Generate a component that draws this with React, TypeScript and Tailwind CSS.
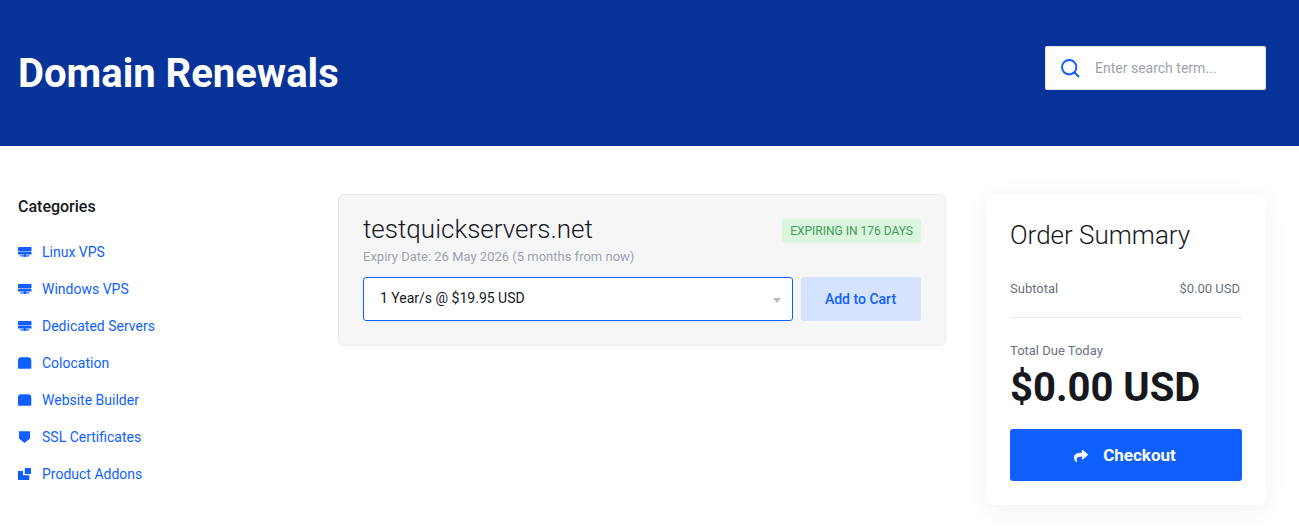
const categories = [
  { label: 'Linux VPS', icon: 'server' },
  { label: 'Windows VPS', icon: 'server' },
  { label: 'Dedicated Servers', icon: 'server' },
  { label: 'Colocation', icon: 'box' },
  { label: 'Website Builder', icon: 'box' },
  { label: 'SSL Certificates', icon: 'shield' },
  { label: 'Product Addons', icon: 'cubes' },
]

function CategoryIcon({ name }: { name: string }) {
  if (name === 'server') {
    return (
      <svg width="14" height="12" viewBox="0 0 14 12" fill="#0f5fff">
        <rect x="0" y="1" width="13.500" height="4.500" rx="0.7" />
        <rect x="0" y="6" width="13.500" height="2.600" rx="0.5" />
        <rect x="5.800" y="8" width="2" height="3" />
        <rect x="2.300" y="9.300" width="9" height="1.200" />
      </svg>
    )
  }
  if (name === 'box') {
    return (
      <svg width="14" height="12" viewBox="0 0 14 12" fill="#0f5fff">
        <path d="M3 0.300h7.500a2.800 2.800 0 0 1 2.800 2.500V11a0.800 0.800 0 0 1-.8.800H0.800a0.800 0.800 0 0 1-.8-.8V2.800a2.800 2.800 0 0 1 3-2.500z" />
      </svg>
    )
  }
  if (name === 'shield') {
    return (
      <svg width="14" height="12" viewBox="0 0 14 12" fill="#0f5fff">
        <path d="M1 0.300h11v7.200L6.500 12 1 7.500z" />
      </svg>
    )
  }
  return (
    <svg width="14" height="12" viewBox="0 0 14 12" fill="#0f5fff">
      <path d="M0 3h5v4.200h6.300v4.800H0zM6.800 0h6.200v6H6.800z" />
    </svg>
  )
}

export default function App() {
  return (
    <div className="h-[532px] overflow-hidden bg-white font-['Roboto',sans-serif]">
      {/* Header */}
      <header className="h-[146px] bg-[#083399] px-[18px] flex items-center justify-between">
        <h1 className="pt-[1px] text-[40px] leading-none font-bold text-white">Domain Renewals</h1>
        <div className="mr-[15px] mb-[10px] flex items-center w-[221px] h-[44px] bg-white rounded-[2px] border border-[#ced4da]/60 pl-[14px]">
          <svg width="20" height="20" viewBox="0 0 20 20" fill="none" stroke="#0f5fff" strokeWidth="2">
            <circle cx="9.200" cy="9.200" r="7.200" />
            <path d="M14.500 14.500l4.500 4.500" />
          </svg>
          <span className="ml-[15px] text-sm text-[#9ca3af]">Enter search term...</span>
        </div>
      </header>

      <div className="flex items-start pl-[18px] pt-[48px]">
        {/* Sidebar */}
        <aside className="w-[320px] shrink-0">
          <h3 className="text-base leading-6 font-medium text-[#16181d] mt-[1px]">Categories</h3>
          <ul className="mt-[14px] flex flex-col">
            {categories.map(c => (
              <li key={c.label} className="h-[37px] flex items-center gap-[10px] text-sm text-[#0f5fff]">
                <CategoryIcon name={c.icon} />
                {c.label}
              </li>
            ))}
          </ul>
          <h3 className="mt-[36px] text-base leading-6 font-medium text-[#16181d]">Actions</h3>
        </aside>

        {/* Renewal card */}
        <main className="w-[608px] shrink-0 h-[152px] rounded-md border border-[#e9eaec] bg-[#f6f6f7] px-[24px] pt-[17px]">
          <div className="flex items-start justify-between">
            <div>
              <div className="text-[26px] leading-[35px] font-light text-[#16181d]">testquickservers.net</div>
              <div className="text-[13px] leading-[19px] text-[#9ca3af]">Expiry Date: 26 May 2026 (5 months from now)</div>
            </div>
            <span className="mt-[7px] h-[24px] px-[8px] flex items-center rounded-[3px] bg-[#dbf5df] text-xs text-[#3f9f55]">
              EXPIRING IN 176 DAYS
            </span>
          </div>
          <div className="mt-[11px] flex gap-[8px]">
            <div className="relative flex-1 h-[44px] flex items-center rounded-[3px] border border-[#0f5fff] bg-white pl-[16px] pb-[2px] text-sm text-[#16181d]">
              1 Year/s @ $19.95 USD
              <span className="absolute right-[11px] top-[20px] w-0 h-0 border-x-[4px] border-x-transparent border-t-[5px] border-t-[#b9bcc2]" />
            </div>
            <button className="w-[120px] h-[44px] pr-[1px] rounded-[3px] bg-[#d6e3ff] text-sm font-medium text-[#0f5fff]">Add to Cart</button>
          </div>
        </main>

        {/* Order summary */}
        <section className="ml-[40px] w-[280px] shrink-0 h-[311px] rounded-lg bg-white px-[24px] pt-[24px] shadow-[0_4px_24px_rgba(0,0,0,0.06)]">
          <h2 className="text-[26px] leading-[34px] font-light text-[#16181d]">Order Summary</h2>
          <div className="mt-[27px] flex justify-between text-[13px] leading-[19px] text-[#6b7280]">
            <span>Subtotal</span>
            <span className="mr-[2px]">$0.00 USD</span>
          </div>
          <div className="mt-[19px] border-t border-[#e9eaec]" />
          <div className="mt-[23px] text-[13px] leading-[19px] text-[#6b7280]">Total Due Today</div>
          <div className="mt-[3px] text-[40px] leading-[50px] font-bold text-[#16181d]">$0.00 USD</div>
          <button className="mt-[16px] w-full h-[52px] pt-[1px] pr-[2px] rounded-[3px] bg-[#0f5fff] flex items-center justify-center gap-[15px] text-[17px] font-bold text-white">
            <svg width="14" height="14" viewBox="0 0 512 512" fill="currentColor">
              <path d="M503.691 189.836L327.687 37.851C312.281 24.546 288 35.347 288 56.015v80.053C127.371 137.907 0 170.1 0 322.326c0 61.441 39.581 122.309 83.333 154.132 13.653 9.931 33.111-2.533 28.077-18.631C66.066 312.814 132.917 274.316 288 272.085V360c0 20.7 24.3 31.453 39.687 18.164l176.004-152c11.071-9.562 11.086-26.753 0-36.328z" />
            </svg>
            Checkout
          </button>
        </section>
      </div>
    </div>
  )
}
